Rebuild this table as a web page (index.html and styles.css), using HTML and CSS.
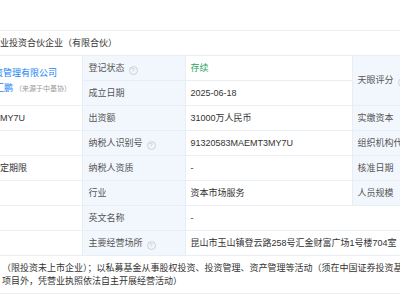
FILE: index.html
```html
<!DOCTYPE html>
<html lang="zh-CN">
<head>
   <meta charset="UTF-8">
   <meta name="viewport" content="width=device-width, initial-scale=1.0">
   <title>工商信息</title>
   <link rel="stylesheet" href="styles.css">
</head>

<body>

   <!-- Business info table (cropped view) -->
   <div class="sheet">
       <table class="info-table">
           <colgroup>
               <col class="col-left">
               <col class="col-label">
               <col class="col-value">
               <col class="col-label2">
           </colgroup>
           <tr>
               <td colspan="4" class="cell-full">业投资合伙企业（有限合伙）</td>
           </tr>
           <tr>
               <td rowspan="2" class="cell-left">
                   <div class="company-link name-line">资管理有限公司</div>
                   <div class="name-line2"><span class="company-link">汇鹏</span><span class="source">（来源于中基协）</span></div>
               </td>
               <td class="label">登记状态<span class="help">?</span></td>
               <td class="value status">存续</td>
               <td rowspan="2" class="label label-right">天眼评分<span class="help">?</span></td>
           </tr>
           <tr>
               <td class="label">成立日期</td>
               <td class="value">2025-06-18</td>
           </tr>
           <tr>
               <td class="cell-left">MY7U</td>
               <td class="label">出资额</td>
               <td class="value">31000万人民币</td>
               <td class="label label-right">实缴资本</td>
           </tr>
           <tr>
               <td class="cell-left"></td>
               <td class="label">纳税人识别号<span class="help">?</span></td>
               <td class="value">91320583MAEMT3MY7U</td>
               <td class="label label-right">组织机构代码</td>
           </tr>
           <tr>
               <td class="cell-left">定期限</td>
               <td class="label">纳税人资质</td>
               <td class="value">-</td>
               <td class="label label-right">核准日期</td>
           </tr>
           <tr>
               <td class="cell-left"></td>
               <td class="label">行业</td>
               <td class="value">资本市场服务</td>
               <td class="label label-right">人员规模</td>
           </tr>
           <tr>
               <td class="cell-left"></td>
               <td class="label">英文名称</td>
               <td colspan="2" class="value">-</td>
           </tr>
           <tr>
               <td class="cell-left"></td>
               <td class="label">主要经营场所<span class="help">?</span></td>
               <td colspan="2" class="value">昆山市玉山镇登云路258号汇金财富广场1号楼704室<span class="tag">附近公司</span></td>
           </tr>
           <tr>
               <td colspan="4" class="cell-scope">（限投资未上市企业）；以私募基金从事股权投资、投资管理、资产管理等活动（须在中国证券投资基金业协会完成登记备案后方可从事经营活动）<br>项目外，凭营业执照依法自主开展经营活动）</td>
           </tr>
       </table>
   </div>

</body>
</html>
```

FILE: styles.css
```css
body {
    margin: 0;
    font-family: "Liberation Sans", "Noto Sans CJK SC", sans-serif;
    font-size: 9px;
    color: #333;
    background-color: white;
    overflow: hidden;
}
.sheet {
    width: 400px;
    padding-top: 30px;
    overflow: hidden;
}
.info-table {
    width: 452px;
    table-layout: fixed;
    border-collapse: collapse;
}
.col-left {
    width: 82px;
}
.col-label {
    width: 103px;
}
.col-value {
    width: 167px;
}
.col-label2 {
    width: 100px;
}
td {
    height: 24px;
    padding: 0;
    border: 1px solid #e9eef5;
    line-height: 13px;
    white-space: nowrap;
    overflow: hidden;
    vertical-align: middle;
}
.cell-full {
    border-left: none;
}
.cell-left {
    border-left: none;
    line-height: 15px;
}
.name-line {
    margin-left: -6px;
}
.name-line2 {
    margin-left: -5px;
}
.label {
    padding-left: 6px;
    background-color: #f2f7fd;
    color: #555;
}
.label-right {
    padding-left: 5px;
}
.value {
    padding-left: 5px;
}
.status {
    color: #2ea35f;
}
.company-link {
    color: #1783f5;
}
.source {
    color: #999;
    font-size: 7px;
    margin-left: 2px;
}
.help {
    display: inline-block;
    width: 7px;
    height: 7px;
    margin-left: 4px;
    border: 1px solid #c3d2e4;
    border-radius: 50%;
    color: #b5c6da;
    font-size: 6px;
    line-height: 7px;
    text-align: center;
    vertical-align: -1px;
}
.tag {
    display: inline-block;
    margin-left: 4px;
    padding: 0 4px;
    background-color: #eef0f4;
    color: #666;
    line-height: 11px;
}
.cell-scope {
    height: 37px;
    border-left: none;
    padding-left: 2px;
    color: #333;
}
```
